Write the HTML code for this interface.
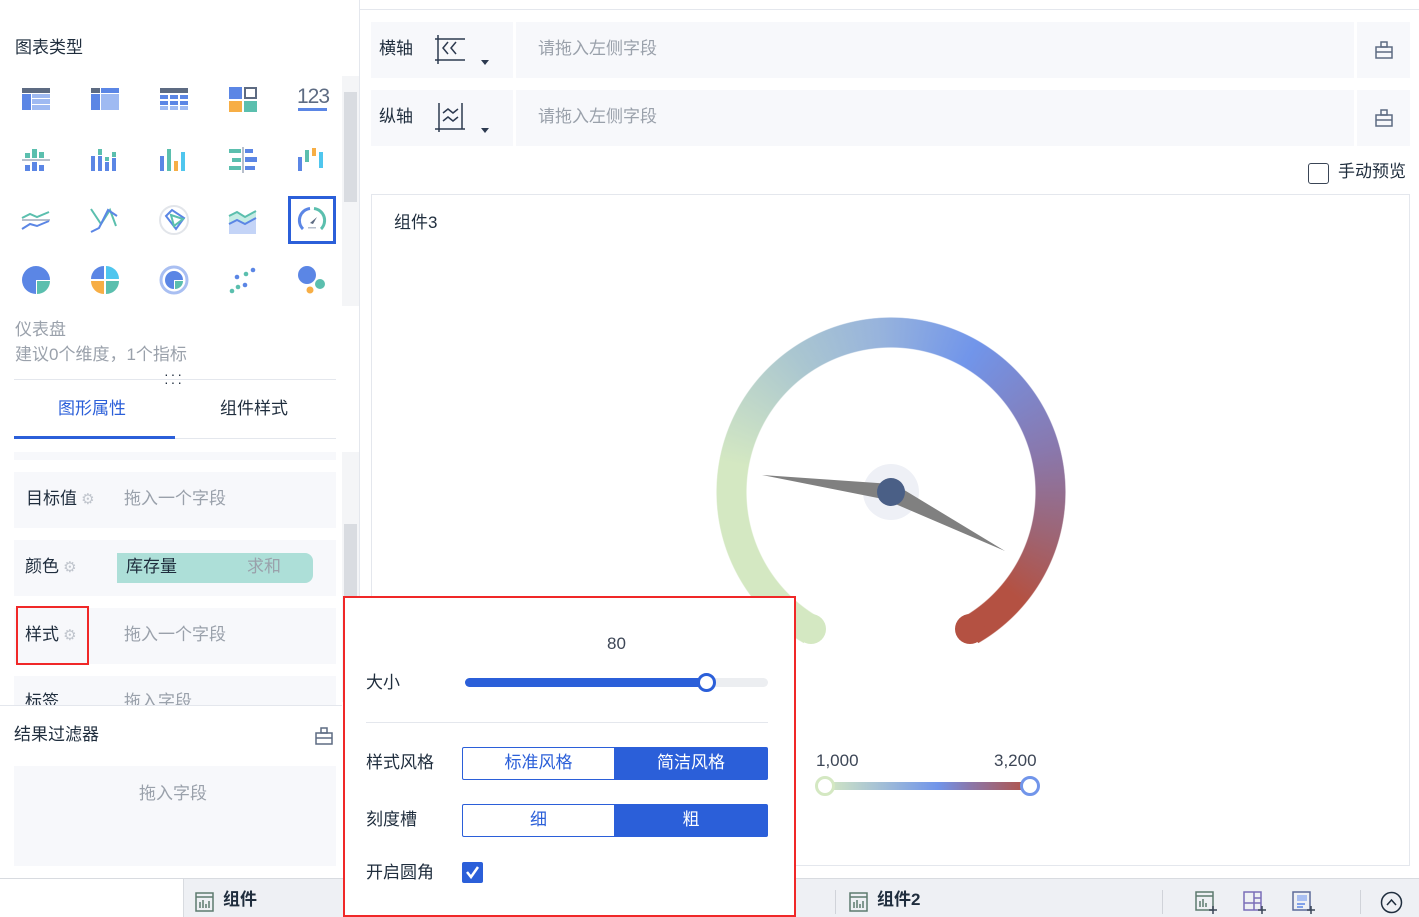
<!DOCTYPE html>
<html><head><meta charset="utf-8">
<style>
*{box-sizing:border-box;margin:0;padding:0}
body{width:1419px;height:917px;overflow:hidden;background:#fff;font-family:"Liberation Sans","Noto Sans CJK SC",sans-serif;color:#1f2d3d;position:relative;font-size:16px;line-height:1.2}
.abs{position:absolute}
.gray{color:#9aa1ab}
.row{background:#f7f8fb}
.ico{position:absolute;width:32px;height:32px}
.btn{position:absolute;display:flex;align-items:center;justify-content:center;font-size:17px}
</style></head><body>

<!-- left panel -->
<div class="abs" style="left:359px;top:0;width:1px;height:880px;background:#e4e7ed"></div>
<div class="abs" style="left:15px;top:38px;font-size:17px">图表类型</div>
<div class="abs" style="left:342px;top:76px;width:17px;height:230px;background:#f4f5f7"></div>
<div class="abs" style="left:344px;top:92px;width:13px;height:110px;background:#d9dce1"></div>

<!-- row1 -->
<svg class="ico" style="left:20px;top:84px" viewBox="0 0 32 32"><rect x="2" y="4" width="28" height="5" fill="#5d6b82"/><rect x="2" y="10" width="9" height="16" fill="#5b86e5"/><rect x="12" y="10" width="18" height="4" fill="#9fbaf2"/><rect x="12" y="15" width="18" height="5" fill="#9fbaf2"/><rect x="12" y="21" width="18" height="5" fill="#9fbaf2"/></svg>
<svg class="ico" style="left:89px;top:84px" viewBox="0 0 32 32"><rect x="2" y="4" width="9" height="5" fill="#5d6b82"/><rect x="12" y="4" width="18" height="5" fill="#5b86e5"/><rect x="2" y="10" width="9" height="16" fill="#5b86e5"/><rect x="12" y="10" width="18" height="16" fill="#9fbaf2"/></svg>
<svg class="ico" style="left:158px;top:84px" viewBox="0 0 32 32"><rect x="2" y="4" width="28" height="5" fill="#5d6b82"/><g fill="#5b86e5"><rect x="2" y="11" width="8" height="4"/><rect x="12" y="11" width="8" height="4"/><rect x="22" y="11" width="8" height="4"/><rect x="2" y="17" width="8" height="4"/><rect x="12" y="17" width="8" height="4"/><rect x="22" y="17" width="8" height="4"/></g><g fill="#9fbaf2"><rect x="2" y="22" width="8" height="4"/><rect x="12" y="22" width="8" height="4"/><rect x="22" y="22" width="8" height="4"/></g></svg>
<svg class="ico" style="left:227px;top:84px" viewBox="0 0 32 32"><rect x="2" y="3" width="13" height="12" fill="#5b86e5"/><rect x="18" y="4" width="11" height="10" fill="none" stroke="#5d6b82" stroke-width="2"/><rect x="2" y="17" width="13" height="11" fill="#f7ae45"/><rect x="17" y="17" width="13" height="11" fill="#5bbfae"/></svg>
<div class="abs" style="left:297px;top:84px;font-size:21px;color:#5d6b82;letter-spacing:-1px">123</div>
<div class="abs" style="left:298px;top:108px;width:29px;height:3px;background:#5b86e5"></div>
<!-- row2 -->
<svg class="ico" style="left:20px;top:144px" viewBox="0 0 32 32"><rect x="2" y="15" width="28" height="2" fill="#b7bfcc"/><g fill="#5bbfae"><rect x="5" y="9" width="5" height="5"/><rect x="12" y="5" width="5" height="9"/><rect x="19" y="8" width="5" height="6"/></g><g fill="#5b86e5"><rect x="5" y="21" width="5" height="6"/><rect x="12" y="18" width="5" height="9"/><rect x="19" y="21" width="5" height="6"/></g></svg>
<svg class="ico" style="left:89px;top:144px" viewBox="0 0 32 32"><g fill="#5b86e5"><rect x="2" y="12" width="4" height="15"/><rect x="9" y="12" width="4" height="15"/><rect x="16" y="18" width="4" height="9"/><rect x="23" y="14" width="4" height="13"/></g><g fill="#5bbfae"><rect x="9" y="5" width="4" height="6"/><rect x="16" y="13" width="4" height="4"/><rect x="23" y="8" width="4" height="5"/></g></svg>
<svg class="ico" style="left:158px;top:144px" viewBox="0 0 32 32"><rect x="2" y="12" width="4" height="15" fill="#5b86e5"/><rect x="9" y="5" width="4" height="22" fill="#5bbfae"/><rect x="16" y="17" width="4" height="10" fill="#f7ae45"/><rect x="23" y="8" width="4" height="19" fill="#4fc6ee"/></svg>
<svg class="ico" style="left:227px;top:144px" viewBox="0 0 32 32"><rect x="15" y="3" width="2" height="26" fill="#b7bfcc"/><g fill="#5bbfae"><rect x="2" y="5" width="12" height="4"/><rect x="5" y="14" width="9" height="4"/><rect x="2" y="22" width="12" height="4"/></g><g fill="#5b86e5"><rect x="18" y="5" width="8" height="4"/><rect x="18" y="13" width="12" height="5"/><rect x="18" y="22" width="10" height="4"/></g></svg>
<svg class="ico" style="left:296px;top:144px" viewBox="0 0 32 32"><rect x="2" y="13" width="4" height="14" fill="#5b86e5"/><rect x="9" y="6" width="4" height="12" fill="#5bbfae"/><rect x="16" y="4" width="4" height="8" fill="#f7ae45"/><rect x="23" y="8" width="4" height="16" fill="#4fc6ee"/></svg>
<!-- row3 -->
<svg class="ico" style="left:20px;top:204px" viewBox="0 0 32 32" fill="none" stroke-width="2"><path d="M2 14 L10 10 L17 13 L29 8" stroke="#5bbfae"/><path d="M2 16 H30" stroke="#b7bfcc"/><path d="M2 25 L10 20 L17 22 L29 17" stroke="#5b86e5"/></svg>
<svg class="ico" style="left:89px;top:204px" viewBox="0 0 32 32" fill="none" stroke-width="2"><path d="M2 5 L12 20 L21 6 L27 22" stroke="#5bbfae"/><path d="M2 28 L10 24 L19 6 L28 12" stroke="#5b86e5"/></svg>
<svg class="ico" style="left:158px;top:204px" viewBox="0 0 32 32" fill="none" stroke-width="2"><circle cx="16" cy="16" r="14" stroke="#e2e5ea"/><path d="M8 12 L14 6 L26 14 L18 25 Z" stroke="#5b86e5"/><path d="M13 11 L25 15 L16 22 Z" stroke="#5bbfae"/></svg>
<svg class="ico" style="left:227px;top:204px" viewBox="0 0 32 32"><path d="M2 12 L10 8 L18 13 L29 7 V30 H2Z" fill="#c5ece4"/><path d="M2 20 L10 16 L18 20 L29 14 V30 H2Z" fill="#c4d4f7"/><path d="M2 12 L10 8 L18 13 L29 7" stroke="#5bbfae" stroke-width="2" fill="none"/><path d="M2 20 L10 16 L18 20 L29 14" stroke="#5b86e5" stroke-width="2" fill="none"/></svg>
<div class="abs" style="left:288px;top:196px;width:48px;height:48px;border:3px solid #2b5fd9"></div>
<svg class="ico" style="left:296px;top:204px" viewBox="0 0 32 32" fill="none" stroke-width="3"><path d="M7 25 A12 12 0 0 1 14 4.5" stroke="#5b86e5"/><path d="M18 4.5 A12 12 0 0 1 25 25" stroke="#5bbfae"/><path d="M14 19 L21 13 L17 20Z" fill="#5d6b82" stroke="none"/><rect x="12" y="23" width="8" height="1.5" fill="#b7bfcc" stroke="none"/></svg>
<!-- row4 -->
<svg class="ico" style="left:20px;top:264px" viewBox="0 0 32 32"><path d="M16 16 V30 A14 14 0 1 1 30 16Z" fill="#5b86e5"/><path d="M17 17 H30 A13 13 0 0 1 17 30Z" fill="#5bbfae"/></svg>
<svg class="ico" style="left:89px;top:264px" viewBox="0 0 32 32"><path d="M15 15 H2 A13 13 0 0 1 15 2Z" fill="#5b86e5"/><path d="M17 15 V2 A13 13 0 0 1 30 15Z" fill="#4fc6ee"/><path d="M15 17 V30 A13 13 0 0 1 2 17Z" fill="#f7ae45"/><path d="M17 17 H30 A13 13 0 0 1 17 30Z" fill="#5bbfae"/></svg>
<svg class="ico" style="left:158px;top:264px" viewBox="0 0 32 32"><circle cx="16" cy="16" r="13" fill="none" stroke="#a9bff2" stroke-width="3"/><path d="M16 16 V25 A9 9 0 1 1 25 16Z" fill="#5b86e5"/><path d="M17 17 H25 A8 8 0 0 1 17 25Z" fill="#5bbfae"/></svg>
<svg class="ico" style="left:227px;top:264px" viewBox="0 0 32 32"><g fill="#5bbfae"><circle cx="5" cy="27" r="2.3"/><circle cx="11" cy="23" r="2.3"/><circle cx="19" cy="10" r="2.3"/></g><g fill="#5b86e5"><circle cx="10" cy="13" r="2.3"/><circle cx="18" cy="21" r="2.3"/><circle cx="26" cy="6" r="2.3"/></g></svg>
<svg class="ico" style="left:296px;top:264px" viewBox="0 0 32 32"><circle cx="11" cy="11" r="9" fill="#5b86e5"/><circle cx="24" cy="20" r="5" fill="#5bbfae"/><circle cx="14" cy="26" r="3.5" fill="#f7ae45"/></svg>

<div class="abs gray" style="left:15px;top:320px;font-size:17px">仪表盘</div>
<div class="abs gray" style="left:15px;top:345px;font-size:17px">建议0个维度，1个指标</div>
<div class="abs" style="left:14px;top:379px;width:322px;height:1px;background:#e4e7ed"></div>
<div class="abs" style="left:164px;top:370px;font-size:14px;letter-spacing:2px;line-height:8px">···<br>···</div>
<div class="abs" style="left:58px;top:399px;font-size:17px;color:#2b5fd9">图形属性</div>
<div class="abs" style="left:220px;top:399px;font-size:17px">组件样式</div>
<div class="abs" style="left:14px;top:438px;width:322px;height:1px;background:#e4e7ed"></div>
<div class="abs" style="left:14px;top:436px;width:161px;height:3px;background:#2b5fd9"></div>

<div class="abs" style="left:342px;top:452px;width:17px;height:250px;background:#f4f5f7"></div>
<div class="abs" style="left:344px;top:524px;width:13px;height:80px;background:#d9dce1"></div>
<div class="abs row" style="left:14px;top:452px;width:322px;height:8px"></div>
<div class="abs row" style="left:14px;top:472px;width:322px;height:56px"></div>
<div class="abs" style="left:26px;top:489px;font-size:17px">目标值<span style="color:#c0c5cd;font-size:15px"> ⚙</span></div>
<div class="abs gray" style="left:124px;top:489px;font-size:17px">拖入一个字段</div>
<div class="abs row" style="left:14px;top:540px;width:322px;height:56px"></div>
<div class="abs" style="left:25px;top:557px;font-size:17px">颜色<span style="color:#c0c5cd;font-size:15px"> ⚙</span></div>
<div class="abs" style="left:117px;top:553px;width:196px;height:30px;background:#addfd8;border-radius:0 8px 8px 0"></div>
<div class="abs" style="left:126px;top:557px;font-size:17px">库存量</div>
<div class="abs gray" style="left:247px;top:557px;font-size:17px">求和</div>
<div class="abs row" style="left:14px;top:608px;width:322px;height:56px"></div>
<div class="abs" style="left:25px;top:625px;font-size:17px">样式<span style="color:#c0c5cd;font-size:15px"> ⚙</span></div>
<div class="abs" style="left:16px;top:606px;width:73px;height:59px;border:2px solid #f02828"></div>
<div class="abs gray" style="left:124px;top:625px;font-size:17px">拖入一个字段</div>
<div class="abs row" style="left:14px;top:676px;width:322px;height:30px;overflow:hidden"><div style="position:absolute;left:11px;top:16px;font-size:17px">标签</div><div class="gray" style="position:absolute;left:110px;top:16px;font-size:17px">拖入字段</div></div>
<div class="abs" style="left:0;top:705px;width:342px;height:1px;background:#e4e7ed"></div>
<div class="abs" style="left:14px;top:725px;font-size:17px">结果过滤器</div>
<svg class="abs" style="left:314px;top:726px" width="20" height="20" viewBox="0 0 20 20" fill="none" stroke="#5d6b82" stroke-width="1.5"><rect x="2" y="7" width="16" height="11"/><rect x="7" y="2" width="6" height="5"/><path d="M2 12 H18"/></svg>
<div class="abs row" style="left:14px;top:766px;width:322px;height:100px"></div>
<div class="abs gray" style="left:139px;top:784px;font-size:17px">拖入字段</div>

<!-- top right -->
<div class="abs" style="left:360px;top:9px;width:1059px;height:1px;background:#e4e7ed"></div>
<div class="abs row" style="left:371px;top:22px;width:142px;height:56px"></div>
<div class="abs row" style="left:516px;top:22px;width:838px;height:56px"></div>
<div class="abs row" style="left:1357px;top:22px;width:53px;height:56px"></div>
<div class="abs" style="left:379px;top:39px;font-size:17px">横轴</div>
<svg class="abs" style="left:434px;top:33px" width="34" height="32" viewBox="0 0 34 32" fill="none" stroke="#2d3a50" stroke-width="1.5"><path d="M4 2 V31 M1 6 H31 M1 27 H31 M14 9 L9 15 L14 21 M22 9 L17 15 L22 21"/></svg>
<div class="abs" style="left:481px;top:60px;border:4px solid transparent;border-top:5px solid #2d3a50"></div>
<div class="abs gray" style="left:538px;top:39px;font-size:17px">请拖入左侧字段</div>
<svg class="abs" style="left:1374px;top:40px" width="20" height="20" viewBox="0 0 20 20" fill="none" stroke="#5d6b82" stroke-width="1.5"><rect x="2" y="7" width="16" height="11"/><rect x="7" y="2" width="6" height="5"/><path d="M2 12 H18"/></svg>
<div class="abs row" style="left:371px;top:90px;width:142px;height:56px"></div>
<div class="abs row" style="left:516px;top:90px;width:838px;height:56px"></div>
<div class="abs row" style="left:1357px;top:90px;width:53px;height:56px"></div>
<div class="abs" style="left:379px;top:107px;font-size:17px">纵轴</div>
<svg class="abs" style="left:434px;top:101px" width="34" height="32" viewBox="0 0 34 32" fill="none" stroke="#2d3a50" stroke-width="1.5"><path d="M5 2 V31 M1 28 H31 M28 2 V28 M9 12 L14 8 L19 12 L24 8 M9 20 L14 16 L19 20 L24 16"/></svg>
<div class="abs" style="left:481px;top:128px;border:4px solid transparent;border-top:5px solid #2d3a50"></div>
<div class="abs gray" style="left:538px;top:107px;font-size:17px">请拖入左侧字段</div>
<svg class="abs" style="left:1374px;top:108px" width="20" height="20" viewBox="0 0 20 20" fill="none" stroke="#5d6b82" stroke-width="1.5"><rect x="2" y="7" width="16" height="11"/><rect x="7" y="2" width="6" height="5"/><path d="M2 12 H18"/></svg>
<div class="abs" style="left:1308px;top:163px;width:21px;height:21px;border:1.5px solid #3a4556;border-radius:3px"></div>
<div class="abs" style="left:1338px;top:162px;font-size:17px">手动预览</div>

<!-- chart card -->
<div class="abs" style="left:371px;top:194px;width:1039px;height:672px;border:1px solid #e4e7ed"></div>
<div class="abs" style="left:394px;top:213px;font-size:17px">组件3</div>

<div class="abs" style="left:716px;top:317px;width:350px;height:350px;border-radius:50%;
background:conic-gradient(from 210deg,#d4e8c2 0deg,#d4e8c2 70deg,#aac6d0 115deg,#98b4dc 145deg,#7195ea 180deg,#8978ad 225deg,#9d6575 255deg,#b45142 280deg,#b45142 300deg,transparent 300deg);
-webkit-mask:radial-gradient(circle,transparent 144px,#000 145px,#000 174px,transparent 175px);mask:radial-gradient(circle,transparent 144px,#000 145px,#000 174px,transparent 175px)"></div>
<div class="abs" style="left:796px;top:614px;width:30px;height:30px;border-radius:50%;background:#d4e8c2"></div>
<div class="abs" style="left:955px;top:614px;width:30px;height:30px;border-radius:50%;background:#b45142"></div>
<svg class="abs" style="left:700px;top:400px" width="400" height="200" viewBox="700 400 400 200">
<circle cx="891" cy="492" r="28" fill="#eef0f6"/>
<polygon points="762,475 891,484 888,500" fill="#808080"/>
<polygon points="1005,551 896,485 886,500" fill="#808080"/>
<circle cx="891" cy="492" r="14" fill="#4a5f86"/>
</svg>

<div class="abs" style="left:816px;top:751px;font-size:17px;color:#3d4656">1,000</div>
<div class="abs" style="left:994px;top:751px;font-size:17px;color:#3d4656">3,200</div>
<div class="abs" style="left:825px;top:782px;width:205px;height:8px;background:linear-gradient(90deg,#d4e8c2,#7195ea 55%,#8978ad 70%,#b45142)"></div>
<div class="abs" style="left:815px;top:776px;width:20px;height:20px;border-radius:50%;border:3px solid #d4e8c2;background:#fff"></div>
<div class="abs" style="left:1020px;top:776px;width:20px;height:20px;border-radius:50%;border:3px solid #7195ea;background:#fff"></div>

<!-- bottom bar -->
<div class="abs" style="left:0;top:878px;width:1419px;height:1px;background:#d8dbe0"></div>
<div class="abs" style="left:183px;top:879px;width:1236px;height:38px;background:#eef0f4"></div>
<div class="abs" style="left:183px;top:879px;width:1px;height:38px;background:#d8dbe0"></div>
<svg class="abs" style="left:195px;top:892px" width="20" height="20" viewBox="0 0 20 20" fill="none" stroke="#5d7a6e" stroke-width="1.5"><rect x="1" y="1" width="17" height="18"/><path d="M1 5 H18 M5 16 V10 M8 16 V8 M11 16 V12 M14 16 V9"/></svg>
<div class="abs" style="left:223px;top:890px;font-size:17px;font-weight:bold">组件</div>
<div class="abs" style="left:835px;top:890px;width:1px;height:24px;background:#d0d3d9"></div>
<svg class="abs" style="left:849px;top:892px" width="20" height="20" viewBox="0 0 20 20" fill="none" stroke="#5d7a6e" stroke-width="1.5"><rect x="1" y="1" width="17" height="18"/><path d="M1 5 H18 M5 16 V10 M8 16 V8 M11 16 V12 M14 16 V9"/></svg>
<div class="abs" style="left:877px;top:890px;font-size:17px;font-weight:bold">组件2</div>
<div class="abs" style="left:1162px;top:890px;width:1px;height:24px;background:#d0d3d9"></div>
<svg class="abs" style="left:1195px;top:890px" width="24" height="24" viewBox="0 0 24 24" fill="none" stroke-width="1.5"><rect x="1" y="2" width="17" height="18" stroke="#5d7a6e"/><path d="M1 6 H18 M5 17 V11 M8 17 V9 M11 17 V13" stroke="#5d7a6e"/><path d="M18 16 V24 M14 20 H22" stroke="#3a4556"/></svg>
<svg class="abs" style="left:1243px;top:890px" width="24" height="24" viewBox="0 0 24 24" fill="none" stroke-width="1.5"><rect x="1" y="2" width="17" height="18" stroke="#7a6eb8"/><path d="M11 2 V20 M1 13 H18 M11 8 H18" stroke="#7a6eb8"/><path d="M19 16 V24 M15 20 H23" stroke="#3a4556"/></svg>
<svg class="abs" style="left:1292px;top:890px" width="24" height="24" viewBox="0 0 24 24" fill="none" stroke-width="1.5"><rect x="1" y="2" width="17" height="18" stroke="#5d6b9a"/><rect x="5" y="5" width="10" height="6" fill="#a9bff2" stroke="none"/><path d="M5 14 H13 M5 17 H11" stroke="#5b86e5"/><path d="M19 16 V24 M15 20 H23" stroke="#3a4556"/></svg>
<div class="abs" style="left:1360px;top:890px;width:1px;height:24px;background:#d0d3d9"></div>
<svg class="abs" style="left:1380px;top:891px" width="23" height="23" viewBox="0 0 23 23" fill="none" stroke="#1f2d3d" stroke-width="1.5"><circle cx="11.5" cy="11.5" r="10"/><path d="M7 14 L11.5 9 L16 14"/></svg>

<!-- popup -->
<div class="abs" style="left:343px;top:596px;width:453px;height:321px;border:2px solid #f02828;background:#fff"></div>
<div class="abs" style="left:607px;top:634px;font-size:17px;color:#3d4656">80</div>
<div class="abs" style="left:366px;top:673px;font-size:17px">大小</div>
<div class="abs" style="left:465px;top:678px;width:303px;height:9px;border-radius:5px;background:#eceef1"></div>
<div class="abs" style="left:465px;top:678px;width:243px;height:9px;border-radius:5px;background:#2b5fd9"></div>
<div class="abs" style="left:697px;top:673px;width:19px;height:19px;border-radius:50%;border:3px solid #2b5fd9;background:#fff"></div>
<div class="abs" style="left:366px;top:722px;width:402px;height:1px;background:#e4e7ed"></div>
<div class="abs" style="left:366px;top:753px;font-size:17px">样式风格</div>
<div class="btn" style="left:462px;top:747px;width:153px;height:33px;border:1px solid #2b5fd9;color:#2b5fd9;border-radius:2px 0 0 2px">标准风格</div>
<div class="btn" style="left:614px;top:747px;width:154px;height:33px;background:#2b5fd9;color:#fff;border-radius:0 2px 2px 0">简洁风格</div>
<div class="abs" style="left:366px;top:810px;font-size:17px">刻度槽</div>
<div class="btn" style="left:462px;top:804px;width:153px;height:33px;border:1px solid #2b5fd9;color:#2b5fd9;border-radius:2px 0 0 2px">细</div>
<div class="btn" style="left:614px;top:804px;width:154px;height:33px;background:#2b5fd9;color:#fff;border-radius:0 2px 2px 0">粗</div>
<div class="abs" style="left:366px;top:863px;font-size:17px">开启圆角</div>
<div class="abs" style="left:462px;top:862px;width:21px;height:21px;background:#2b5fd9;border-radius:2px"></div>
<svg class="abs" style="left:462px;top:862px" width="21" height="21" viewBox="0 0 21 21" fill="none" stroke="#fff" stroke-width="2.5"><path d="M5 10 L9 15 L16 5"/></svg>
</body></html>
